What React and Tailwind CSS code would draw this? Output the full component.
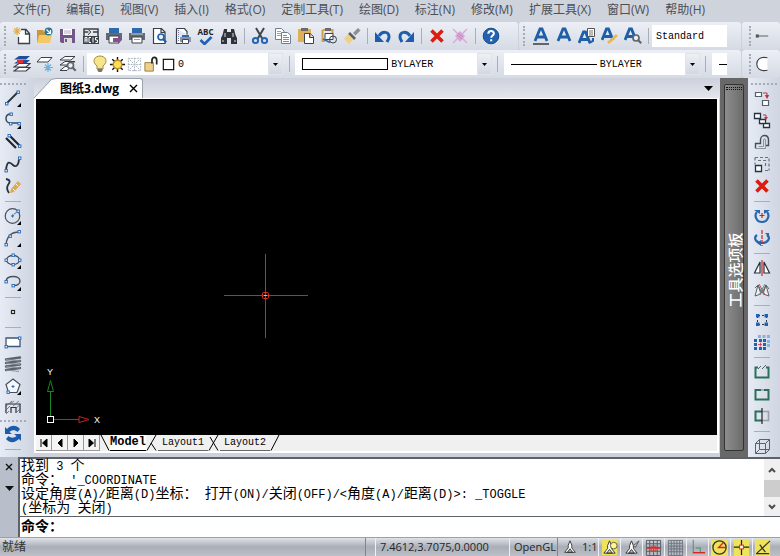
const BLUE = '#1f5fa8';
const DARK = '#3a4048';

// all icons share an 18x18 grid
const Svg = ({ children, size = 18, className = '' }) => (
  <svg width={size} height={size} viewBox="0 0 18 18" fill="none" className={'shrink-0 ' + className} aria-hidden="true">{children}</svg>
);

const Node = ({ x, y }) => <rect x={x - 1} y={y - 1} width="2.4" height="2.4" fill="#fff" stroke="#2f6db5" strokeWidth="1" />;
const Corner = () => <path d="M17 14v4h-4z" fill="#000" />;
const Lens = ({ x, y, c = BLUE }) => (
  <g stroke={c}>
    <circle cx={x} cy={y} r="3" fill="#e8f1fa" strokeWidth="1.7" />
    <path d={`M${x + 2.2} ${y + 2.2}l3 3`} strokeWidth="2.2" />
  </g>
);
const LetterA = () => <path d="M3 14L8 2h2l5 12M5.5 10h7" stroke={BLUE} strokeWidth="2.8" />;

const icons = {
  new: <><path d="M8 2.500h5l3.500 4v10H5.500V10M12.500 2.500V7h4" fill="#fff" stroke={DARK} strokeWidth="1.3" /><path d="M4 0v8M0 4h8M1.200 1.200l5.600 5.600M6.800 1.200L1.200 6.800" stroke="#e3ac4a" strokeWidth="1.2" /></>,
  open: <><path d="M1 3h6l1 2h6v11H1z" fill="#c9963c" /><path d="M3 8h13l-2 8H1z" fill="#f4c868" /><circle cx="12.500" cy="4.500" r="4" fill="#2d7795" /><path d="M10.500 2.500l3.500 3.500M14.500 3v3.500H11" stroke="#fff" strokeWidth="1.2" /></>,
  save: <><path d="M1 2h15v14H2.500L1 14.500z" fill="#74558a" /><path d="M4 2h9v6H4z" fill="#fff" /><path d="M5 4h7M5 6h7" stroke="#b5a6c0" /><path d="M5 11h8v5H5z" fill="#ddd" /><path d="M6 12h2v3H6z" fill="#74558a" /></>,
  acis: <><path d="M2 9V2h14v7M2 5h5M11 5h5" stroke={DARK} strokeWidth="1.5" /><path d="M6 2l3 3-3 3" fill="#bbb" stroke="#555" /><path d="M1 9h16v8H1z" fill={DARK} /><path d="M3 15.500v-5h2v5M3 13h2M9 10.500H7v5h2M11 10.500v5M15.500 10.500h-2V13h2v2.500h-2" stroke="#fff" /></>,
  printTo: <><path d="M4 1h10v6H4z" fill="#2d6ab0" /><path d="M1 6h16v7H1z" fill="#636a73" /><path d="M4 9h10v7H4z" fill="#fff" stroke={DARK} /><path d="M8 11h5V9l4 4-4 4v-2H8z" fill="#87518f" /></>,
  print: <><path d="M4 1h10v6H4z" fill="#2d6ab0" /><path d="M1 6h16v7H1z" fill="#636a73" /><path d="M3 7h12" stroke="#c5cbd2" /><path d="M4 10h10v6H4z" fill="#fff" stroke={DARK} /><path d="M6 12.500h6" stroke="#999" /></>,
  preview: <><path d="M2.500 1.500h8l3.500 3.500v11.500H2.500zM10 1.500v4h4" fill="#fff" stroke={DARK} strokeWidth="1.200" /><Lens x={10} y={10} /></>,
  publish: <><path d="M2.500 1.500h8l2.500 3v3M8 16.500H2.500v-15" fill="#fff" stroke={DARK} strokeWidth="1.200" /><path d="M4.500 3v11" stroke="#77a" strokeDasharray="1 1" /><path d="M8 8h7v3H8z" fill="#2d6ab0" /><path d="M6 10h11v5H6z" fill="#8d949e" /><path d="M8.500 12.500h6v4h-6z" fill="#fff" stroke="#446" /></>,
  spell: <path d="M4 12l4 4 7-7" stroke="#1f62b5" strokeWidth="2.600" />,
  find: <><path d="M4 2h3v3h4V2h3l1.500 6 1.500 3v6h-6v-6H7v6H1v-6l1.500-3z" fill="#30343a" /><path d="M5 6v4M13 6v4M3 13v2M15 13v2" stroke="#b9bec6" strokeWidth="1.200" /></>,
  cut: <><path d="M5 1l6.500 11M13 1L6.500 12" stroke="#40464e" strokeWidth="2" /><circle cx="4.500" cy="13.500" r="2.600" stroke="#2466b4" strokeWidth="2" /><circle cx="13.500" cy="13.500" r="2.600" stroke="#2466b4" strokeWidth="2" /></>,
  copy: <><path d="M1.500 1.500h6L10 4v8.500H1.500z" fill="#fff" stroke="#6f7e90" /><path d="M3 4.500h4M3 6.500h4M3 8.500h4" stroke="#7aa6d8" /><path d="M7.500 5.500h6L16.500 8v8.500h-9z" fill="#fff" stroke="#6f7e90" /><path d="M9 8.500h4M9 10.500h6M9 12.500h6M9 14.500h6" stroke="#6095d0" /></>,
  paste: <><path d="M1 2h13v13H1z" fill="#dfaf57" /><path d="M4 1h7v3H4z" fill="#6b6b6b" /><path d="M7.500 6.500H13l3.500 3v7h-9zM12.500 6.500v4h4" fill="#fff" stroke={DARK} /></>,
  pasteSpecial: <><path d="M2.500 3v11H5M2.500 3h10v4" stroke="#d3a14b" strokeWidth="2" /><path d="M5 1h6v3H5z" fill="#6b6b6b" /><path d="M5 6.500h8v6H5z" fill="#fff" stroke={DARK} /><circle cx="13" cy="12.500" r="3.500" stroke={DARK} /><path d="M3 12l7 3.500" stroke="#2f6db5" strokeWidth="1.500" /></>,
  brush: <><path d="M10 6l5-5 2.500 2.500-5 5z" fill="#8c9096" /><path d="M7 5l6 6-2 2-6-6z" fill="#5d6268" /><path d="M5 7l5.500 5.500L6 17l-5-5z" fill="#eed184" /></>,
  undo: <><path d="M5 9c3-5 10-5 10 1 0 2-1 3-2 5" stroke="#1f5cab" strokeWidth="3" /><path d="M1 5v10h9z" fill="#1f5cab" /></>,
  redo: <><path d="M13 9C10 4 3 4 3 10c0 2 1 3 2 5" stroke="#1f5cab" strokeWidth="3" /><path d="M17 5v10H8z" fill="#1f5cab" /></>,
  erase: <path d="M3.500 3.500l11 11M14.500 3.500l-11 11" stroke="#dc1c0c" strokeWidth="3.600" />,
  purge: <><path d="M2 2l5 5M16 2l-5 5M2 16l5-5M16 16l-5-5" stroke="#dfa8dc" strokeWidth="1.500" /><path d="M4 9l5-5 5 5-5 6z" fill="#dba6d8" /><path d="M6 8l5 4M7 6l5 4" stroke="#b98abd" /></>,
  help: <><circle cx="9" cy="9" r="7.800" fill="#2362ae" stroke="#174b8d" /><path d="M6.300 6.800c0-3.600 5.600-3.600 5.600-.3 0 2-2.700 2-2.700 4.300M9.200 12.300v2" stroke="#fff" strokeWidth="2" /></>,
  textUnder: <><LetterA /><path d="M1 17h16" stroke="#111" strokeWidth="1.200" /></>,
  text: <LetterA />,
  textPage: <><path d="M1 16L5.500 5h2L12 16M3 12.500h7" stroke={BLUE} strokeWidth="2.800" /><path d="M9.500 1.500h7v8h-7z" fill="#fff" stroke="#555" /><path d="M11 4h4M11 6h4M11 8h4" stroke="#777" /><path d="M15 11v3l-4 2" stroke={BLUE} strokeWidth="2" /></>,
  textEdit: <><path d="M1 13L5.500 2h2L12 13M3 9.500h7" stroke={BLUE} strokeWidth="2.800" /><path d="M6 15l9-8 2 2-9 8z" fill="#e9b759" /></>,
  textFind: <><path d="M1 13L5.500 2h2L12 13M3 9.500h7" stroke={BLUE} strokeWidth="2.800" /><Lens x={12} y={11} c="#62666c" /></>,
  dim: <><path d="M2 9h15" stroke="#555" strokeWidth="1.200" /><path d="M1 7h4v4H1z" fill="#555" /></>,
  arcBig: <path d="M14 2C5 0 2 5 2 9s3 9 12 7" fill="#fff" stroke={DARK} strokeWidth="1.300" />,

  layers: <><path d="M6 8.500h11l-4 3.500H1zM6 12.500h11L13 16H1z" fill="#fff" stroke={DARK} strokeWidth="1.200" /><path d="M6 1h11l-4 3.500H1zM6 5h11l-4 3.500H1z" fill="#1f4f9c" /><path d="M4 5h6v3H4z" fill="#d33" /></>,
  layerFreeze: <><path d="M5 2.500h11L12 7H1z" fill="#fff" stroke={DARK} /><path d="M12 8v9M8 12.500h9M9 9.500l6 6M15 9.500l-6 6" stroke="#69b3e4" strokeWidth="1.200" /></>,
  layerFind: <><path d="M6 1.500h10L12 5H1zM6 6.500h10L12 10H1zM6 11.500h6l-4 4H1z" fill="#fff" stroke={DARK} /><Lens x={11.500} y={10.500} c="#62666c" /></>,

  line: <><path d="M3 14L14 3" stroke="#26323f" strokeWidth="1.800" /><Node x={2.500} y={14.500} /><Node x={14} y={3} /><Corner /></>,
  pline: <><path d="M7 3C0 3 1 12 6 12h9" stroke="#374a60" strokeWidth="1.500" /><Node x={7} y={3} /><Node x={6.500} y={12.500} /><Node x={15} y={12.500} /><Corner /></>,
  mline: <><path d="M2 5l10 10M5 2l11 11" stroke="#20262e" strokeWidth="2.200" /><Node x={5} y={2.500} /><Node x={15.500} y={13} /></>,
  spline: <><path d="M2 15C3 5 6 7 9 10s6 0 6-7" stroke="#26323f" strokeWidth="1.800" /><Node x={2} y={15.500} /><Node x={15.500} y={3} /></>,
  sketch: <><path d="M2 2c5 1 4 3 2 6s-1 5 1 8" stroke="#26323f" strokeWidth="1.800" /><path d="M6 16l1-4 7-8 3 3-7 8z" fill="#dfa94c" /><path d="M9 12l2 2M12 7l2 2" stroke="#fff" /></>,
  circle: <><circle cx="8.500" cy="9" r="7.300" stroke="#465260" strokeWidth="1.200" /><path d="M8.500 9L13 4.500" stroke="#26323f" strokeDasharray="2 1" /><Node x={14} y={4} /><path d="M7 9h3M8.500 7.500v3" stroke="#2f6db5" /><Corner /></>,
  arc: <><path d="M2 15C3 8 7 3 15 3" stroke="#465260" strokeWidth="1.300" /><Node x={2} y={15.500} /><Node x={6} y={7} /><Node x={15} y={2.500} /><Corner /></>,
  ellipse: <><ellipse cx="9" cy="9" rx="6.500" ry="4.500" stroke="#465260" strokeWidth="1.300" /><Node x={9} y={4} /><Node x={2} y={9} /><Node x={15.500} y={9} /><Node x={9} y={13.500} /><Corner /></>,
  ellipseArc: <><path d="M2 8c1-6 14-6 14 0 0 3-3 4.500-6 4.500" stroke="#465260" strokeWidth="1.400" /><Node x={2} y={8.500} /><Node x={9} y={12.500} /><Corner /></>,
  point: <rect x="7.500" y="7.500" width="3" height="3" fill="#fff" stroke="#222" strokeWidth="1.200" />,
  rect: <><path d="M2 5h14v8.500H2z" fill="#fff" stroke="#3a5878" strokeWidth="1.300" /><Node x={15.500} y={5} /><Node x={2} y={13.500} /></>,
  coil: <g stroke="#5d636b"><path d="M2 4.500l14-2M2 8l14-2M2 11.500l14-2M2 15l14-2" strokeWidth="2.400" strokeLinecap="round" /><path d="M2 4.500L16 6M2 8l14 1.500M2 11.500L16 13M2 15l13 1.500" stroke="#8b9199" /></g>,
  polygon: <><path d="M9 2l7 5.500-3 8H4.500L2 7.500z" fill="#f5f8fc" stroke="#465260" strokeWidth="1.200" /><path d="M7.500 9.500h3M9 8v3" stroke="#2f6db5" /><Node x={4} y={15} /><Corner /></>,
  hatch: <><path d="M2 14V5h14v9M7 14V8.500h5V14" stroke="#2b333d" strokeWidth="1.200" /><path d="M1 8l7-6M1 12l5-5M2 15l3-3M6 5l4-3M9 7l6-5M12 9l5-4M13 13l4-4" stroke="#5b636c" strokeWidth=".8" /></>,
  refresh: <><path d="M1 2v7h7L5.500 7c2.500-2.500 6-2 8 0L16 4C12-.5 7 0 3 4z" fill="#1d5ca8" /><path d="M17 16V9h-7l2.500 2c-2.500 2.500-6 2-8 0L2 14c4 4.500 9 4 13 0z" fill="#1d5ca8" /></>,

  block: <><path d="M2.500 3.500h6v4h-6zM9.500 11.500h6v5h-6z" fill="#fff" stroke="#555f6c" strokeWidth="1.200" /><path d="M10 4h4v3" stroke="#c0303c" /><path d="M11.800 6h4.400L14 10z" fill="#c0303c" /></>,
  blocks: <><path d="M1.500 2.500h6v5h-6zM6.500 8.500h6v4h-6zM10.500 12.500h6v4h-6z" fill="#fff" stroke="#26323f" strokeWidth="1.300" /><path d="M10 4h3v3" stroke="#c0303c" /><path d="M11 6h4l-2 3z" fill="#c0303c" /></>,
  offset: <><path d="M2.500 15.500v-5h5V7c0-6 8-6 8 0v5.500h-3" stroke="#444d58" strokeWidth="1.400" /><path d="M5.500 13.500h5V7c0-1.600 2-1.600 2 0v8.500h-10" stroke="#8c949e" /></>,
  scale: <><path d="M2 2.500h14v13M2 2.500v7M12 15.500h4M5 5.500h7.500v7" stroke="#6c737c" strokeWidth="1.200" strokeDasharray="3 2" /><path d="M2.500 10.500h6v6h-6z" fill="#fff" stroke="#26323f" strokeWidth="1.300" /></>,
  rotate: <><path d="M4 5c-3 3-1 10 5 10s8-7 5-10" stroke="#2a66ac" strokeWidth="2.200" /><path d="M1 3h6v4zM17 3h-6v4z" fill="#2a66ac" /><path d="M6.500 8.500h5M9 6v5" stroke="#d02020" strokeWidth="1.200" /></>,
  rotate3d: <><path d="M4 6c-4 3-1 8 5 8s9-5 5-8" stroke="#2a66ac" strokeWidth="2.200" /><path d="M8 11v6l-4-3zM12 4h4v4z" fill="#2a66ac" /><path d="M9 1v16" stroke="#d02020" strokeDasharray="4 1" strokeWidth="1.200" /></>,
  mirror: <><path d="M7 3v11H1.500zM11 3v11h5.500z" fill="#fff" stroke="#26323f" strokeWidth="1.200" /><path d="M9 1v16" stroke="#d02020" strokeWidth="1.200" /></>,
  mirror3d: <><path d="M5 4l3 9-6 2zM13 4l-3 9 6 2zM2 7l3-3 4 8 4-8 3 4" fill="#eee" stroke="#59636b" /><path d="M6 3l6 11" stroke="#b5504a" /><path d="M12 3L6 14" stroke="#5c9080" /></>,
  array: <><path d="M5 4.500h8M5 13.500h8M4.500 5v8M13.500 5v8" stroke="#333" strokeDasharray="2 2" /><path d="M3 3h3.500v3.500H3zM11.500 3H15v3.500h-3.500zM3 11.500h3.500V15H3zM11.500 11.500H15V15h-3.500z" fill="#1f62b5" /></>,
  array3d: <><path d="M5 2h3v3H5zM9.500 2h3v3h-3zM14 2h3v3h-3zM14 7h3v3h-3zM14 11h3v3h-3z" fill="#8ab0db" /><path d="M1 6h3v3H1zM6 6h3v3H6zM10 6h3v3h-3zM1 10h3v3H1zM10 10h3v3h-3zM1 14h3v3H1zM6 14h3v3H6zM10 14h3v3h-3z" fill="#1f62b5" /><path d="M5 11.500h4M7.500 9.500v4" stroke="#d33" strokeWidth=".8" /></>,
  breakTop: <><path d="M5 4.500H2.500v10h13v-10H13" stroke="#28705a" strokeWidth="2" /><path d="M5 6l3-3M9 6l4-4" stroke="#59636b" /></>,
  breakAt: <><path d="M2.500 5h13v9.500h-13z" stroke="#28705a" strokeWidth="2" /><path d="M8 4h3v2H8z" fill="#aab" /></>,
  join: <><path d="M9 4.500H2.500v9H9" stroke="#28705a" strokeWidth="2" /><path d="M9 4.500h6.500v9H9" stroke="#9aa0a6" strokeWidth="1.600" /><path d="M9 1v16" stroke="#222" strokeWidth="1.200" /></>,
  cube: <path d="M2.500 6.500h10v10h-10zM2.500 6.500l4-4h10v10l-4 4M12.500 6.500l4-4M6.500 2.500v10h10M6.500 12.500l-4 4" stroke="#59626d" />,
};

const toolbarMain = [
  ['new', '新建'], ['open', '打开'], ['save', '保存'], ['acis', 'ACIS'], ['printTo', '输出'], ['print', '打印'], ['preview', '打印预览'], ['publish', '发布'], ['spell', '拼写检查'], ['find', '查找'], null,
  ['cut', '剪切'], ['copy', '复制'], ['paste', '粘贴'], ['pasteSpecial', '选择性粘贴'], ['brush', '特性匹配'], null,
  ['undo', '放弃'], ['redo', '重做'], null, ['erase', '删除'], ['purge', '清理'], null, ['help', '帮助'],
];
const toolbarText = [['textUnder', '文字样式'], ['text', '文字'], ['textPage', '多行文字'], ['textEdit', '编辑文字'], ['textFind', '查找文字'], null];
const toolbarLayers = [['layers', '图层'], ['layerFreeze', '冻结图层'], ['layerFind', '图层浏览'], null];
const drawTools = [
  ['line', '直线'], ['pline', '多段线'], ['mline', '多线'], ['spline', '样条曲线'], ['sketch', '徒手画'], null,
  ['circle', '圆'], ['arc', '圆弧'], ['ellipse', '椭圆'], ['ellipseArc', '椭圆弧'], null,
  ['point', '点'], null, ['rect', '矩形'], ['coil', '螺旋'], ['polygon', '多边形'], ['hatch', '填充'],
];
const modifyTools = [
  ['block', '复制实体'], ['blocks', '阵列复制'], ['offset', '偏移'], ['scale', '缩放'], ['erase', '删除'], null,
  ['rotate', '旋转'], ['rotate3d', '三维旋转'], null, ['mirror', '镜像'], ['mirror3d', '三维镜像'], null,
  ['array', '阵列'], ['array3d', '三维阵列'], null, ['breakTop', '打断'], ['breakAt', '打断于点'], ['join', '合并'], null, ['cube', '三维'],
];
const menus = [['文件', 'F'], ['编辑', 'E'], ['视图', 'V'], ['插入', 'I'], ['格式', 'O'], ['定制工具', 'T'], ['绘图', 'D'], ['标注', 'N'], ['修改', 'M'], ['扩展工具', 'X'], ['窗口', 'W'], ['帮助', 'H']];
const history = ['找到 3 个', "命令： '_COORDINATE", '设定角度(A)/距离(D)坐标： 打开(ON)/关闭(OFF)/<角度(A)/距离(D)>: _TOGGLE', '(坐标为 关闭)'];

const bar = 'flex items-center bg-gradient-to-b from-[#eceff5] to-[#d5dae4] rounded-[3px]';
const mono = "font-['Liberation_Mono','Noto_Sans_CJK_SC',monospace]";

const Grip = () => <div className="w-1 h-5 shrink-0 mr-[2px] border-l-2 border-dotted border-[#a5abb7]" />;
const GripH = () => <div className="h-[2px] w-[26px] shrink-0 border-t-2 border-dotted border-[#a5abb7]" />;
const Divider = ({ className = 'w-2' }) => (
  <div className={'flex justify-center shrink-0 ' + className}><div className="w-px h-4 bg-[#a9afba]" /></div>
);

function ToolRow({ tools }) {
  return tools.map((t, i) => t ? (
    <button key={i} aria-label={t[1]} className="w-[23px] h-6 shrink-0 flex flex-col items-center justify-center">
      {t[0] === 'spell' ? (
        <>
          <span className="text-[8px] leading-[8px] font-bold text-[#222] font-['Open_Sans',sans-serif]">ABC</span>
          <svg width="16" height="9" viewBox="3 8 13 9" fill="none">{icons.spell}</svg>
        </>
      ) : <Svg>{icons[t[0]]}</Svg>}
    </button>
  ) : <Divider key={i} />);
}

function ToolColumn({ tools }) {
  return tools.map((t, i) => t ? (
    <button key={i} aria-label={t[1]} className="h-[22px] w-6 shrink-0 flex items-center justify-center"><Svg>{icons[t[0]]}</Svg></button>
  ) : <div key={i} className="h-2 shrink-0 flex items-center"><div className="w-4 h-px bg-[#a9afba]" /></div>);
}

function Combo({ label, value, pad, children }) {
  return (
    <label className={'relative flex flex-1 min-w-0 h-[22px] bg-white ' + mono}>
      <select aria-label={label} className={'appearance-none w-full h-full bg-transparent text-[10px] text-black outline-none ' + pad}>
        <option>{value}</option>
      </select>
      <span className="absolute inset-y-0 left-1 flex items-center pointer-events-none">{children}</span>
      <span className="absolute inset-y-0 right-0 w-[15px] flex items-center justify-center bg-gradient-to-b from-[#edf0f5] to-[#d3d8e2] border border-[#dfe3ea] pointer-events-none">
        <svg width="5" height="3" viewBox="0 0 5 3"><path d="M0 0h5L2.500 3z" /></svg>
      </span>
    </label>
  );
}

function Canvas() {
  return (
    <div className="relative flex-1 min-h-0 bg-black overflow-hidden">
      <svg width="120" height="120" className="absolute left-[170px] top-[137px]">
        <rect x="18" y="59" width="84" height="1" fill="#d0241e" />
        <rect x="59" y="18" width="1" height="84" fill="#148a1c" />
        <rect x="56.500" y="56.500" width="6" height="6" rx="1" fill="none" stroke="#d83020" />
        <rect x="58" y="59" width="3" height="1" fill="#e0d040" />
      </svg>
      <svg width="80" height="80" className="absolute left-0 bottom-px" fill="none">
        <path d="M14.500 63V37M11.500 37.500h6l-3-11z" stroke="#1b861f" />
        <path d="M17 65.500h26M43 62.500l10 3-10 3z" stroke="#c8201c" />
        <rect x="11.500" y="62.500" width="6" height="6" stroke="#fff" />
        <text x="11" y="21" fill="#fff" className="text-[9px] font-['Liberation_Sans',sans-serif]">Y</text>
        <text x="58" y="69" fill="#fff" className="text-[9px] font-['Liberation_Sans',sans-serif]">X</text>
      </svg>
    </div>
  );
}

function LayoutTabs() {
  const arrows = [['首页', 'M3 2v8M9 2v8L4.500 6z'], ['上一页', 'M8 2v8L4 6z'], ['下一页', 'M4 2v8l4-4z'], ['末页', 'M9 2v8M3 2v8l4.500-4z']];
  return (
    <div className={'flex h-4 shrink-0 items-stretch bg-[#f0f0f0] text-black ' + mono}>
      {arrows.map(([name, d]) => (
        <button key={name} aria-label={name} className="w-4 flex items-center justify-center border-r border-b border-[#999] bg-[#f4f4f4]">
          <svg width="12" height="12" viewBox="0 0 12 12" stroke="#000"><path d={d} fill="#000" /></svg>
        </button>
      ))}
      <svg width="10" height="16" className="shrink-0" fill="none" stroke="#000"><path d="M1 0l8 15.500" /></svg>
      <button className="border-b border-black bg-white text-[12px] leading-[15px] font-bold">Model</button>
      <svg width="12" height="16" className="shrink-0" fill="none" stroke="#000"><path d="M10 0L1 15.500M5 8l5 7.500" /></svg>
      <button className="border-b border-[#666] px-1 text-[10px] leading-[15px]">Layout1</button>
      <svg width="12" height="16" className="shrink-0" fill="none" stroke="#000"><path d="M10 0L1 15.500M2 2l8 13.500" /></svg>
      <button className="border-b border-[#666] px-1 text-[10px] leading-[15px]">Layout2</button>
      <svg width="10" height="16" className="shrink-0" fill="none" stroke="#000"><path d="M9 0L1 15.500" /></svg>
    </div>
  );
}

// Chinese runs are set larger so that one ideograph takes two latin cells
function Mixed({ text }) {
  return text.split(/([\u3000-\uffef]+)/).map((part, i) => i % 2 ? <span key={i} className="text-[14px]">{part}</span> : part);
}

const compass = <path d="M9 2l2 5v3l4 5H3l4-5V7zM9 11l-3 4h6z" fill="#fff" stroke="#333" />;
const statusIcons = [
  ['注释可见性', <><path d="M1 1h16v16H1z" fill="#efe35c" />{compass}<circle cx="13.500" cy="7" r="3.500" fill="#fff5a0" stroke="#665f30" /></>],
  ['自动比例', <>{compass}<path d="M17 2l-4 7-2-2z" fill="#d9c2bc" stroke="#555" /></>],
  ['捕捉', <><path d="M1.500 1.500h15v16h-15zM5 2v15M9 2v15M13 2v15M2 5h14M2 9h14M2 13h14" stroke="#555b63" /><path d="M2 10h14M9 5v10" stroke="#d33" /><rect x="6.500" y="7.500" width="5" height="5" stroke="#d33" /></>],
  ['栅格', <path d="M1.500 1.500h15v16h-15zM4.500 2v15M7.500 2v15M10.500 2v15M13.500 2v15M2 4.500h14M2 7.500h14M2 10.500h14M2 13.500h14" stroke="#6b727b" />],
  ['正交', <><path d="M4.500 1v13M7 9.500h5V14" stroke="#3c8f70" /><path d="M4 14.500h13" stroke="#d22" strokeWidth="1.500" /></>],
  ['极轴', <><path d="M0 0h18v18H0z" fill="#efe35c" /><circle cx="9" cy="9" r="7" stroke="#333" strokeWidth="1.400" /><path d="M16 9H8l5-5" stroke="#d22" strokeWidth="1.400" /></>],
  ['对象捕捉', <><path d="M1 0h16v18H1z" fill="#efe35c" /><path d="M1 8.500h16M9 1v16" stroke="#222" strokeWidth="1.300" /><rect x="7" y="6.500" width="4" height="4" fill="#fff" stroke="#d22" /></>],
  ['对象追踪', <><path d="M0 0h16v18H0z" fill="#efe35c" /><path d="M2 15L16 2M1 15.500h14M5 6l6 8" stroke="#333" strokeWidth="1.300" /></>],
];

export default function App() {
  return (
    <div className="flex flex-col h-screen min-h-[500px] overflow-hidden bg-[#ccd1db] text-[#30343a] font-['Open_Sans','Noto_Sans_CJK_SC',sans-serif]">
      <nav className="flex items-start h-[22px] shrink-0 pl-[13px] gap-4 bg-[#cfd3dc]">
        {menus.map(([name, key]) => (
          <button key={key} className="shrink-0 whitespace-nowrap text-[12px] leading-5 text-[#4a4f58]">{name}({key})</button>
        ))}
      </nav>

      <div className="flex h-7 shrink-0 gap-px">
        <div className={bar + ' pl-1 pr-4 shrink-0'}><Grip /><ToolRow tools={toolbarMain} /></div>
        <div className={bar + ' flex-1 min-w-0 pl-1 pr-[14px]'}>
          <Grip /><ToolRow tools={toolbarText} />
          <input aria-label="文字样式" defaultValue="Standard" className={'flex-1 min-w-0 h-[22px] bg-white pl-1 text-[10px] text-black outline-none ' + mono} />
        </div>
        <div className={bar + ' w-[38px] shrink-0 pl-[7px]'}><Grip /><button aria-label="线性标注"><Svg size={14}>{icons.dim}</Svg></button></div>
      </div>

      <div className="flex h-7 shrink-0 gap-px">
        <div className={bar + ' flex-1 min-w-0 pl-1 pr-[14px]'}>
          <Grip /><ToolRow tools={toolbarLayers} />
          <Combo label="图层" value="0" pad="pl-[91px]">
            <Svg><path d="M6 11C0 6 4 1 9 1s9 5 3 10v3H6z" fill="#f6e58a" stroke="#a58c3c" /><path d="M6.500 13.500h5v2l-1 1.500h-3l-1-1.500z" fill="#777" /></Svg>
            <Svg size={17}><path d="M9 1v16M1 9h16M3.500 3.500l11 11M14.500 3.500l-11 11" stroke="#111" strokeWidth="1.500" /><circle cx="9" cy="9" r="4.500" fill="#f8e25c" stroke="#c98a1a" strokeWidth="1.500" /></Svg>
            <Svg size={17}><path d="M2.500 2.500h13v13h-13zM9 2v14M2 9h14M4 4l10 10M14 4L4 14" stroke="#a8b3be" strokeDasharray="2 1" /></Svg>
            <Svg size={17}><path d="M2 7h9v9H2z" fill="#ecd08c" stroke="#9c7c3c" /><path d="M9.500 8V4.500c0-4 5-4 5 0V9" stroke="#222" strokeWidth="1.800" /></Svg>
            <Svg size={17}><rect x="3.500" y="3.500" width="11" height="11" fill="#fff" stroke="#000" strokeWidth="1.200" /></Svg>
          </Combo>
          <Divider className="w-3" />
          <Combo label="颜色" value="BYLAYER" pad="pl-24"><span className="w-[86px] h-3 ml-[3px] border border-black bg-white" /></Combo>
          <Divider className="w-3" />
          <Combo label="线型" value="BYLAYER" pad="pl-24"><span className="w-[86px] h-px ml-[3px] bg-black" /></Combo>
          <Divider className="w-3" />
          <button aria-label="线宽" className="w-[15px] h-[22px] shrink-0 flex items-center justify-end bg-white"><span className="w-2 h-px bg-black" /></button>
        </div>
        <div className={bar + ' w-[38px] shrink-0 pl-[7px]'}><Grip /><button aria-label="圆弧"><Svg size={16}>{icons.arcBig}</Svg></button></div>
      </div>

      <main className="flex flex-1 min-h-0">
        <aside className="w-[34px] shrink-0 flex flex-col items-start pt-[5px] bg-gradient-to-r from-[#e6ebf5] to-[#cfd5e1] overflow-hidden">
          <div className="flex flex-col items-center shrink-0">
            <GripH />
            <div className="flex flex-col items-center pt-[2px] pb-px"><ToolColumn tools={drawTools} /></div>
            <GripH />
            <div className="flex flex-col items-center pt-px"><ToolColumn tools={[['refresh', '重生成'], null]} /></div>
          </div>
        </aside>

        <section className="flex-1 min-w-0 flex flex-col bg-[#ccd1db]">
          <header className="flex h-5 shrink-0 items-stretch bg-gradient-to-b from-[#cdd1db] to-[#e3e6ed]">
            <svg width="21" height="20" viewBox="0 0 21 20" className="shrink-0"><path d="M0 20L16 3c1-2 3-2 5-2v19z" fill="#fff" stroke="none" /><path d="M0 20L16 3c1-2 3-2 5-2" fill="none" stroke="#9aa1ad" /></svg>
            <div className="flex items-center gap-[10px] pl-[5px] pr-1 bg-white border-t border-r border-[#9aa1ad] rounded-tr-[3px] text-black">
              <span className="text-[12px] leading-[18px] font-bold">图纸3.dwg</span>
              <button aria-label="关闭"><svg width="9" height="9" viewBox="0 0 9 9" stroke="#000" strokeWidth="1.400"><path d="M1 1l7 7M8 1L1 8" /></svg></button>
            </div>
            <div className="flex-1" />
            <button aria-label="图纸列表" className="w-6 flex items-center justify-center"><svg width="9" height="5" viewBox="0 0 9 5"><path d="M0 0h9L4.500 5z" /></svg></button>
          </header>
          <div className="flex-1 min-h-0 flex flex-col border-2 border-white border-t-[1px] mr-px">
            <Canvas />
            <LayoutTabs />
          </div>
          <div className="h-1 shrink-0" />
        </section>

        <aside className="w-7 shrink-0 flex flex-col px-1 pt-[6px] pb-[6px] bg-[#686868]">
          <div className="flex-1 flex flex-col items-center border border-[#333] rounded-[2px] bg-gradient-to-r from-[#8d8d8d] to-[#6c6c6c]">
            <div className="w-4 h-[3px] mt-[2px] shrink-0 border-y border-dotted border-[#111]" />
            <div className="flex-1 flex items-center justify-center w-5">
              <span className="-rotate-90 whitespace-nowrap text-[15px] leading-5 font-medium text-white">工具选项板</span>
            </div>
          </div>
        </aside>

        <aside className="w-8 shrink-0 flex flex-col items-center pt-[5px] bg-gradient-to-r from-[#e6ebf5] to-[#cfd5e1] overflow-hidden">
          <GripH />
          <div className="flex flex-col items-center pt-[2px] pr-1"><ToolColumn tools={modifyTools} /></div>
        </aside>
      </main>

      <section className="flex h-20 shrink-0 bg-[#b9bfca]">
        <div className="w-[18px] shrink-0 flex flex-col items-center pt-[6px] gap-[15px]">
          <button aria-label="关闭命令栏"><svg width="8" height="8" viewBox="0 0 8 8" stroke="#111" strokeWidth="1.400"><path d="M1 1l6 6M7 1L1 7" /></svg></button>
          <button aria-label="命令栏菜单"><svg width="9" height="5" viewBox="0 0 9 5"><path d="M0 0h9L4.500 5z" fill="#111" /></svg></button>
        </div>
        <div className={'flex-1 min-w-0 flex flex-col bg-white border-l-2 border-t-2 border-[#5d6168] text-black ' + mono}>
          <div className="flex flex-1 min-h-0 border-b border-[#5d6168]">
            <div className="flex-1 min-w-0 pl-px">
              {history.map(line => <p key={line} className="h-[14px] text-[12px] leading-[14px] whitespace-pre"><Mixed text={line} /></p>)}
            </div>
            <div className="w-4 shrink-0 flex flex-col items-center bg-[#f0f0f0]">
              <button aria-label="向上滚动" className="h-[21px] flex items-center"><svg width="8" height="6" viewBox="0 0 8 6" fill="none" stroke="#4d4d4d" strokeWidth="2"><path d="M1 5l3-3 3 3" /></svg></button>
              <div className="w-full h-[17px] bg-[#cdcdcd]" />
              <button aria-label="向下滚动" className="flex-1 flex items-center"><svg width="8" height="6" viewBox="0 0 8 6" fill="none" stroke="#4d4d4d" strokeWidth="2"><path d="M1 1l3 3 3-3" /></svg></button>
            </div>
          </div>
          <label className="flex items-center h-5 shrink-0 pl-px text-[14px] leading-5 font-bold">
            命令：<input className="flex-1 min-w-0 outline-none font-normal" />
          </label>
        </div>
      </section>

      <footer className="flex items-center h-[19px] shrink-0 border-t border-[#9ba1ab] bg-gradient-to-b from-[#dfe2e7] via-[#a9aeb7] to-[#bcc1c9] text-[11px] leading-[18px] text-[#22262c]">
        <span className="flex-1 pl-[2px] text-[12px] text-[#333]">就绪</span>
        <div className="w-[10px] h-full shrink-0 border-l border-[#7e858f]" />
        <span className="w-[134px] h-full shrink-0 pl-1 border-l border-[#eef0f3]">7.4612,3.7075,0.0000</span>
        <span className="w-12 h-full shrink-0 pl-1 border-l border-[#eef0f3]">OpenGL</span>
        <button className="w-[41px] h-full shrink-0 pl-1 flex items-center gap-1 border-l border-[#7e858f] whitespace-nowrap"><Svg size={16}>{compass}</Svg>1:1</button>
        {statusIcons.map(([name, icon]) => (
          <button key={name} aria-label={name} className="w-[22px] h-full shrink-0 flex items-center justify-center border-l border-[#eef0f3]"><Svg size={17}>{icon}</Svg></button>
        ))}
        <div className="w-[6px] shrink-0" />
      </footer>
    </div>
  );
}
